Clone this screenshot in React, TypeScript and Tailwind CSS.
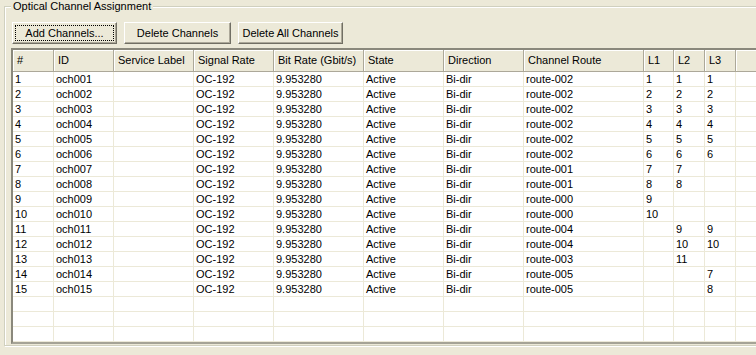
import React from 'react';

const columns = [
  { label: '#', width: 'w-[41px]' },
  { label: 'ID', width: 'w-[60px]' },
  { label: 'Service Label', width: 'w-[80px]' },
  { label: 'Signal Rate', width: 'w-[80px]' },
  { label: 'Bit Rate (Gbit/s)', width: 'w-[90px]' },
  { label: 'State', width: 'w-[80px]' },
  { label: 'Direction', width: 'w-[80px]' },
  { label: 'Channel Route', width: 'w-[120px]' },
  { label: 'L1', width: 'w-[30px]' },
  { label: 'L2', width: 'w-[31px]' },
  { label: 'L3', width: 'w-[31px]' },
  { label: '', width: 'w-[80px]' },
];

// route, L1, L2, L3 for each channel
const channelData: [string, string, string, string][] = [
  ['route-002', '1', '1', '1'],
  ['route-002', '2', '2', '2'],
  ['route-002', '3', '3', '3'],
  ['route-002', '4', '4', '4'],
  ['route-002', '5', '5', '5'],
  ['route-002', '6', '6', '6'],
  ['route-001', '7', '7', ''],
  ['route-001', '8', '8', ''],
  ['route-000', '9', '', ''],
  ['route-000', '10', '', ''],
  ['route-004', '', '9', '9'],
  ['route-004', '', '10', '10'],
  ['route-003', '', '11', ''],
  ['route-005', '', '', '7'],
  ['route-005', '', '', '8'],
];

const rows: string[][] = [
  ...channelData.map(([route, l1, l2, l3], i) => {
    const n = i + 1;
    return [
      String(n),
      'och' + String(n).padStart(3, '0'),
      '',
      'OC-192',
      '9.953280',
      'Active',
      'Bi-dir',
      route,
      l1,
      l2,
      l3,
      '',
    ];
  }),
  Array(12).fill(''),
  Array(12).fill(''),
  Array(12).fill(''),
];

const XpButton = ({ label, width, focused }: { label: string; width: string; focused?: boolean }) => (
  <button
    className={`${width} h-[22px] p-[2px] bg-[#ECE9D8] text-black border border-t-white border-l-white border-r-[#716F64] border-b-[#716F64] shadow-[inset_-1px_-1px_0_#ACA899]`}
  >
    <div
      className={`w-full h-full flex items-center justify-center border border-dotted ${
        focused ? 'border-black' : 'border-transparent'
      }`}
    >
      {label}
    </div>
  </button>
);

export default function App() {
  return (
    <div
      className="w-[756px] h-[355px] overflow-hidden bg-[#ECE9D8] pl-[4px] text-[11px] text-black"
      style={{ fontFamily: '"Liberation Sans", Arial, sans-serif' }}
    >
      <fieldset className="w-[820px] h-[346px] border border-[#D0D0BF] shadow-[inset_1px_1px_0_#fff,1px_1px_0_#fff] pl-[6px]">
        <legend className="px-[2px] leading-[13px] bg-[#ECE9D8]">Optical Channel Assignment</legend>

        <div className="flex gap-[7px] pt-[9px] pl-[1px]">
          <XpButton label="Add Channels..." width="w-[105px]" focused />
          <XpButton label="Delete Channels" width="w-[107px]" />
          <XpButton label="Delete All Channels" width="w-[105px]" />
        </div>

        <div className="mt-[4px] w-[800px] border-t-2 border-l-2 border-b-2 border-t-[#8A887C] border-l-[#8A887C] border-b-[#A5A396] bg-white">
          <div className="flex bg-[#ECE9D8] border-b border-[#ACA899]">
            {columns.map((col, i) => (
              <div
                key={i}
                className={`${col.width} shrink-0 h-[21px] pl-[4px] flex items-center border-r border-[#ACA899] shadow-[inset_1px_1px_0_#fff] whitespace-nowrap overflow-hidden`}
              >
                {col.label}
              </div>
            ))}
          </div>
          {rows.map((row, r) => (
            <div key={r} className="flex">
              {row.map((cell, c) => (
                <div
                  key={c}
                  className={`${columns[c].width} shrink-0 h-[15px] pl-[2px] flex items-center border-r border-b border-[#ECE9D8] whitespace-nowrap overflow-hidden leading-[14px]`}
                >
                  {cell}
                </div>
              ))}
            </div>
          ))}
        </div>
      </fieldset>
    </div>
  );
}
